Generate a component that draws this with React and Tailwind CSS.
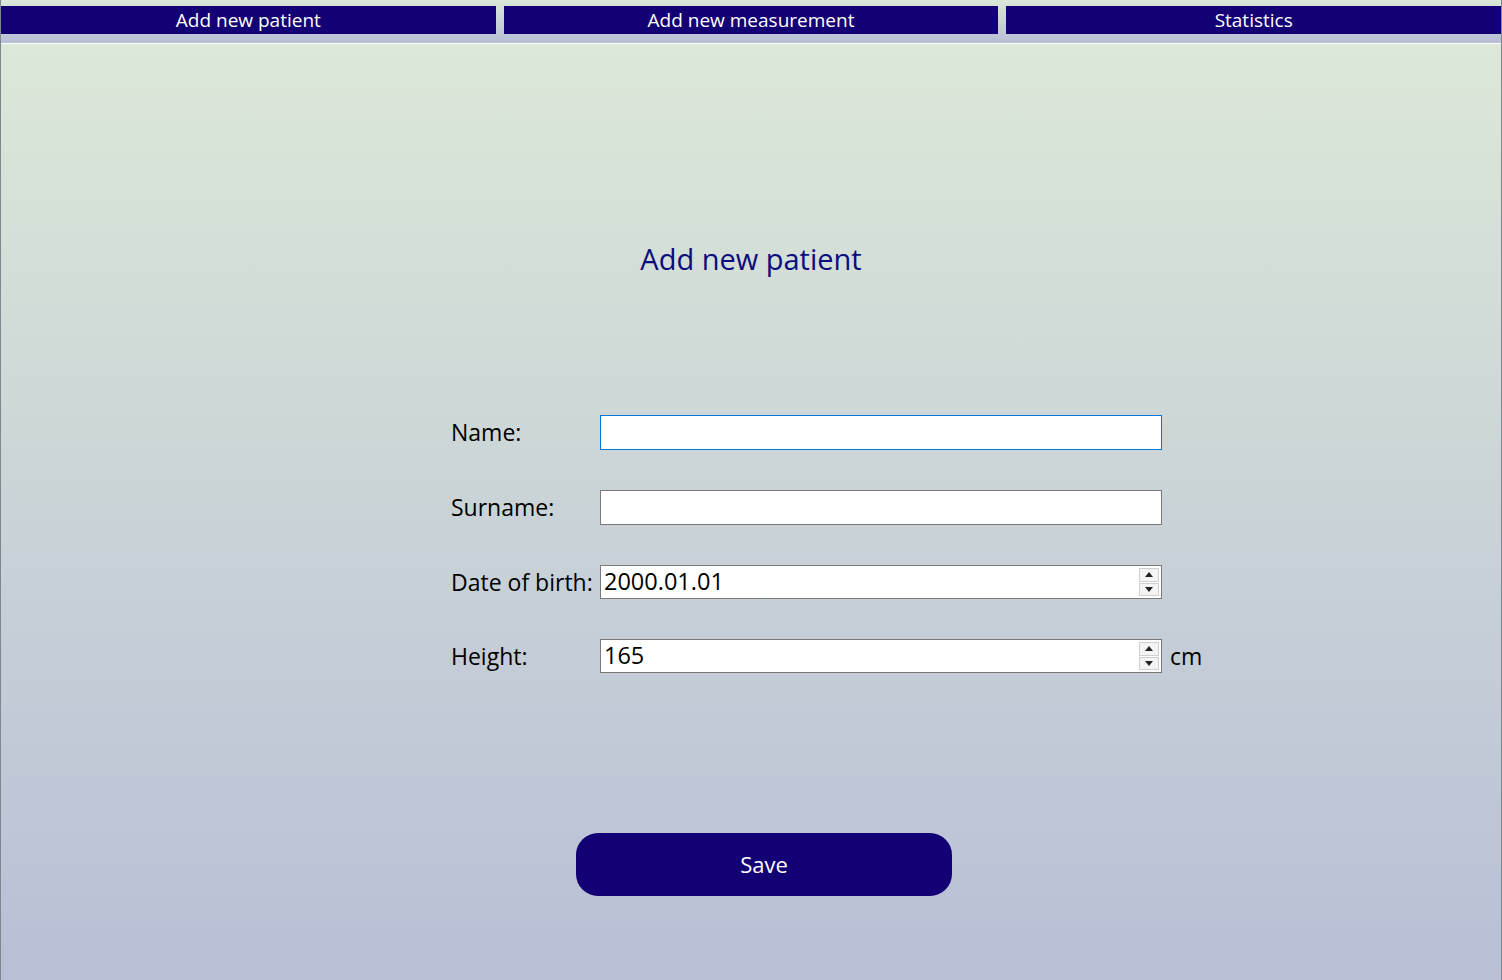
import React from "react";

const font = { fontFamily: '"Open Sans", "Noto Sans", sans-serif' };

function NavButton({ label }) {
  return (
    <button className="flex h-[28px] flex-1 items-center justify-center bg-[#120074] text-[19px] text-white">
      {label}
    </button>
  );
}

function Spinner() {
  return (
    <div className="flex w-[22px] flex-col gap-[1px] py-[2px] pr-[2px]">
      <div className="flex h-[14px] items-center justify-center border border-[#d0d0d0] bg-[#f4f4f4]">
        <svg width="8" height="5" viewBox="0 0 8 5">
          <path d="M0 5 L4 0 L8 5 Z" fill="#222" />
        </svg>
      </div>
      <div className="flex h-[14px] items-center justify-center border border-[#d0d0d0] bg-[#f4f4f4]">
        <svg width="8" height="5" viewBox="0 0 8 5">
          <path d="M0 0 L4 5 L8 0 Z" fill="#222" />
        </svg>
      </div>
    </div>
  );
}

function Field({ label, value, focused, spin, suffix }) {
  return (
    <div className={`flex items-center ${spin ? "h-[34px]" : "h-[35px]"}`}>
      <div className="w-[149px] text-[23px] text-black">{label}</div>
      <div
        className={`flex h-full w-[562px] items-stretch bg-white ${
          focused ? "border border-[#0078d7]" : "border border-[#7a7a7a]"
        }`}
      >
        <input
          readOnly
          value={value || ""}
          className="min-w-0 flex-1 bg-transparent px-[3px] text-[23.5px] text-black outline-none"
          style={font}
        />
        {spin && <Spinner />}
      </div>
      {suffix && <div className="ml-[8px] text-[23px] text-black">{suffix}</div>}
    </div>
  );
}

export default function App() {
  return (
    <div
      className="flex h-[980px] w-full flex-col border-x border-[#7b8a90] bg-[#b9c0d6]"
      style={font}
    >
      <div className="h-[43px] bg-linear-to-b from-[#dbe7d8] to-[#b8bed6] pt-[6px]">
        <div className="flex gap-[8px]">
          <NavButton label="Add new patient" />
          <NavButton label="Add new measurement" />
          <NavButton label="Statistics" />
        </div>
      </div>
      <div className="h-px bg-white" />
      <div className="flex flex-1 flex-col bg-linear-to-b from-[#dce8d8] to-[#b8bfd6]">
        <h1 className="mt-[195px] text-center text-[29px] leading-[40px] text-[#0c0c7c]">
          Add new patient
        </h1>

        <div className="ml-[450px] mt-[136px] flex flex-col gap-[40px]">
          <Field label="Name:" focused />
          <Field label="Surname:" />
          <Field label="Date of birth:" value="2000.01.01" spin />
          <Field label="Height:" value="165" spin suffix="cm" />
        </div>

        <button className="ml-[575px] mt-[160px] h-[63px] w-[376px] rounded-[22px] bg-[#120074] text-[22px] text-white">
          Save
        </button>
      </div>
    </div>
  );
}
